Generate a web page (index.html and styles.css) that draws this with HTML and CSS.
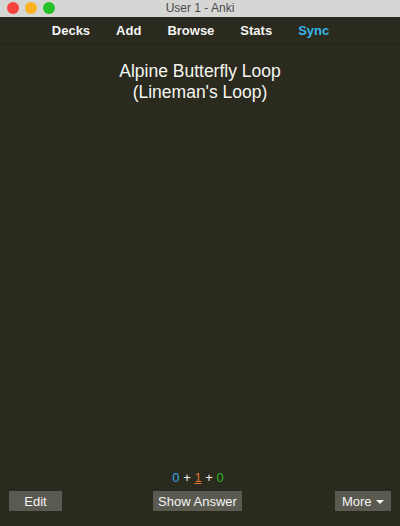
FILE: index.html
```html
<!DOCTYPE html>
<html>
<head>
<meta charset="utf-8">
<link rel="stylesheet" href="styles.css">
</head>
<body>
<div class="window">
  <div class="titlebar">
    <div class="lights">
      <span class="light red"></span>
      <span class="light yellow"></span>
      <span class="light green"></span>
    </div>
    <div class="title">User 1 - Anki</div>
  </div>
  <nav class="toolbar">
    <a class="tab">Decks</a>
    <a class="tab">Add</a>
    <a class="tab">Browse</a>
    <a class="tab">Stats</a>
    <a class="tab sync">Sync</a>
  </nav>
  <main class="card">
    <div class="question">Alpine Butterfly Loop<br>(Lineman's Loop)</div>
  </main>
  <div class="bottom">
    <div class="counts"><span class="new">0</span> + <span class="learn">1</span> + <span class="review">0</span></div>
    <div class="buttons">
      <button class="btn edit">Edit</button>
      <button class="btn show">Show Answer</button>
      <button class="btn more">More <span class="caret"></span></button>
    </div>
  </div>
</div>
</body>
</html>
```
FILE: styles.css
```css
* { box-sizing: border-box; }
html, body { margin: 0; padding: 0; }
body {
  width: 400px;
  height: 526px;
  overflow: hidden;
  font-family: "Liberation Sans", Arial, sans-serif;
  background: #2a2a1f;
}
.window {
  display: flex;
  flex-direction: column;
  height: 526px;
}
.titlebar {
  height: 17px;
  background: #d6d6d4;
  position: relative;
  display: flex;
  align-items: center;
  justify-content: center;
}
.lights {
  position: absolute;
  left: 7px;
  top: 2px;
  display: flex;
  gap: 6px;
}
.light {
  width: 12px;
  height: 12px;
  border-radius: 50%;
  display: block;
}
.red { background: #f9423f; }
.yellow { background: #fcb21e; }
.green { background: #24c12b; }
.title {
  font-size: 12px;
  color: #4a4a4a;
  line-height: 17px;
}
.toolbar {
  height: 27px;
  display: flex;
  justify-content: center;
  align-items: center;
  padding-top: 1px;
  padding-right: 19px;
  border-bottom: 1px solid #222219;
}
.tab {
  font-size: 13px;
  font-weight: bold;
  color: #f4f4f4;
  margin: 0 13px;
}
.sync { color: #39b4ea; }
.card {
  flex: 1;
  display: flex;
  justify-content: center;
}
.question {
  margin-top: 17px;
  text-align: center;
  color: #f6f6f0;
  font-size: 17.5px;
  line-height: 21px;
}
.bottom {
  height: 57px;
  display: flex;
  flex-direction: column;
}
.counts {
  text-align: center;
  font-size: 13px;
  color: #f4f4f4;
  height: 18px;
  line-height: 18px;
  padding-right: 4px;
}
.new { color: #3fa9f0; }
.learn { color: #d8742c; text-decoration: underline; }
.review { color: #2fb52f; }
.buttons {
  display: flex;
  justify-content: space-between;
  padding: 4px 9px 0 9px;
}
.btn {
  height: 20px;
  background: #5a5a50;
  border: none;
  color: #f4f4f4;
  font-family: "Liberation Sans", Arial, sans-serif;
  font-size: 13px;
  padding: 0;
  margin: 0;
}
.edit { width: 53px; }
.show { width: 89px; margin-right: 2px; }
.more { width: 56px; }
.caret {
  display: inline-block;
  width: 0;
  height: 0;
  border-left: 4px solid transparent;
  border-right: 4px solid transparent;
  border-top: 4px solid #f4f4f4;
  vertical-align: middle;
  margin-left: 1px;
}
```
